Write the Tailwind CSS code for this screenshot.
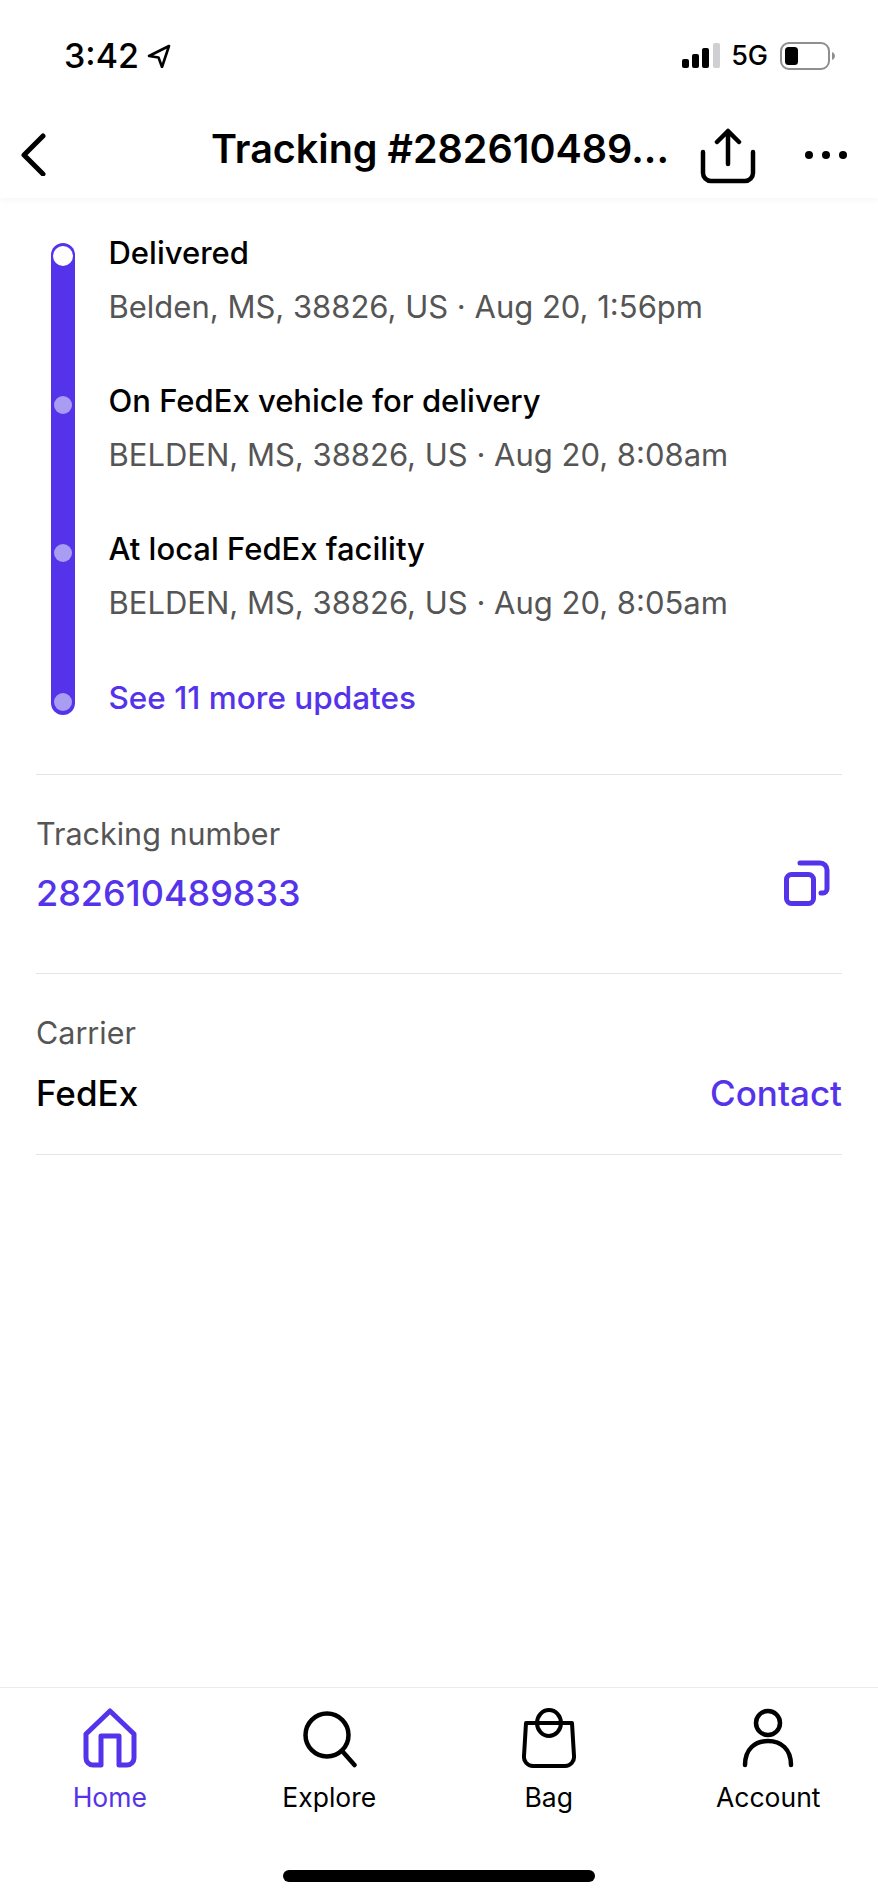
<!DOCTYPE html>
<html lang="en">
<head>
    <meta charset="UTF-8">
    <title>Tracking</title>
    <script src="https://cdn.jsdelivr.net/npm/@tailwindcss/browser@4"></script>
</head>
<body class="bg-white">
<div class="w-[878px] h-[1900px] flex flex-col bg-white text-black font-['Inter',sans-serif]">

    <!-- status bar -->
    <div class="h-[112px] shrink-0 flex items-start pt-[37px] pl-[64px] pr-[42px]">
        <span class="text-[34px] leading-[38px] font-medium">3:42</span>
        <svg class="ml-[8px] mt-[7px]" width="24" height="24" viewBox="0 0 24 24" fill="none" stroke="#000" stroke-width="2.600" stroke-linejoin="round"><path d="M22 2 2 12l9.500 1.500L15 23z"/></svg>
        <div class="ml-auto flex items-center h-[38px]">
            <svg width="38" height="26" viewBox="0 0 38 26"><rect x="0" y="16" width="7" height="9" rx="2" fill="#000"/><rect x="10" y="11" width="7" height="14" rx="2" fill="#000"/><rect x="20" y="5" width="7" height="20" rx="2" fill="#000"/><rect x="31" y="0" width="7" height="25" rx="2" fill="#cfcfd4"/></svg>
            <span class="ml-[11px] text-[27px] leading-[38px] font-medium">5G</span>
            <svg class="ml-[12px]" width="56" height="28" viewBox="0 0 56 28"><rect x="1" y="1" width="48" height="26" rx="8" fill="none" stroke="#8e8e93" stroke-width="2"/><rect x="5" y="5" width="13" height="18" rx="3.500" fill="#000"/><path d="M52 10c2 1 3 2.500 3 4s-1 3-3 4z" fill="#8e8e93"/></svg>
        </div>
    </div>

    <!-- nav bar -->
    <div class="h-[86px] shrink-0 relative flex items-center shadow-[0_3px_6px_rgba(0,0,0,0.03)]">
        <svg class="absolute left-[18px] top-[20px]" width="30" height="44" viewBox="0 0 30 44" fill="none" stroke="#000" stroke-width="5" stroke-linecap="round" stroke-linejoin="round"><path d="M25 4 6 23l19 19"/></svg>
        <span class="absolute left-[211px] top-[14px] text-[39.500px] leading-[46px] font-semibold whitespace-nowrap">Tracking #282610489...</span>
        <svg class="absolute left-[699px] top-[16px]" width="58" height="56" viewBox="0 0 58 56" fill="none" stroke="#000" stroke-width="4.500" stroke-linecap="round" stroke-linejoin="round"><path d="M29 36V3M18 14 29 3l11 11"/><path d="M4 24v21a8 8 0 0 0 8 8h34a8 8 0 0 0 8-8V24"/></svg>
        <div class="absolute left-[805px] top-[39px] flex gap-[9px]">
            <span class="w-[8px] h-[8px] rounded-full bg-black"></span>
            <span class="w-[8px] h-[8px] rounded-full bg-black"></span>
            <span class="w-[8px] h-[8px] rounded-full bg-black"></span>
        </div>
    </div>

    <!-- timeline -->
    <div class="flex pl-[51px] pt-[45px]">
        <div class="w-[24px] h-[472px] rounded-full bg-[#5533ea] flex flex-col items-center pt-[3px]">
            <span class="w-[20px] h-[20px] rounded-full bg-white"></span>
            <span class="w-[18px] h-[18px] rounded-full bg-[#a99cf3] mt-[130px]"></span>
            <span class="w-[18px] h-[18px] rounded-full bg-[#a99cf3] mt-[130px]"></span>
            <span class="w-[18px] h-[18px] rounded-full bg-[#a99cf3] mt-[131px]"></span>
        </div>
        <div class="ml-[33.500px] -mt-[15px]">
            <div class="h-[148px]">
                <p class="text-[31px] leading-[50px] font-medium">Delivered</p>
                <p class="text-[31px] leading-[58px] text-[#555]">Belden, MS, 38826, US · Aug 20, 1:56pm</p>
            </div>
            <div class="h-[148px]">
                <p class="text-[31px] leading-[50px] font-medium">On FedEx vehicle for delivery</p>
                <p class="text-[31px] leading-[58px] text-[#555]">BELDEN, MS, 38826, US · Aug 20, 8:08am</p>
            </div>
            <div class="h-[148px]">
                <p class="text-[31px] leading-[50px] font-medium">At local FedEx facility</p>
                <p class="text-[31px] leading-[58px] text-[#555]">BELDEN, MS, 38826, US · Aug 20, 8:05am</p>
            </div>
            <p class="text-[31.500px] leading-[50px] mt-[1px] font-medium text-[#5533ea]">See 11 more updates</p>
        </div>
    </div>

    <!-- details -->
    <div class="mx-[36px] mt-[51px] border-t border-[#e4e4e7] h-[199px] pt-[39px]">
        <p class="text-[30.500px] leading-[40px] text-[#555]">Tracking number</p>
        <div class="flex items-start justify-between">
            <p class="text-[36px] leading-[48px] font-medium text-[#5533ea] mt-[15px]">282610489833</p>
            <svg class="mr-[12px] mt-[6px]" width="46" height="47" viewBox="0 0 46 47" fill="none" stroke="#5533ea" stroke-width="5"><rect x="2.500" y="14.500" width="27" height="29" rx="5"/><path d="M16 3h20a7 7 0 0 1 7 7v19a4 4 0 0 1-4 4h-2" stroke-linecap="round" stroke-linejoin="round"/></svg>
        </div>
    </div>
    <div class="mx-[36px] border-t border-b border-[#e4e4e7] h-[182px] pt-[39px]">
        <p class="text-[30.500px] leading-[40px] text-[#555]">Carrier</p>
        <div class="flex items-center justify-between mt-[12px]">
            <p class="text-[35px] leading-[56px] font-medium">FedEx</p>
            <p class="text-[35px] leading-[56px] font-medium text-[#5533ea]">Contact</p>
        </div>
    </div>

    <!-- tab bar -->
    <div class="mt-auto border-t border-[#ececec] h-[213px] shrink-0 flex flex-col">
        <div class="grid grid-cols-4 pt-[20px]">
            <div class="flex flex-col items-center text-[#5533ea]">
                <svg width="56" height="60" viewBox="0 0 56 60" fill="none" stroke="#5533ea" stroke-width="5" stroke-linejoin="round"><path d="M28 3 4 26v24a7 7 0 0 0 7 7h8V28h18v29h8a7 7 0 0 0 7-7V26z"/></svg>
                <span class="text-[26.500px] leading-[32px] mt-[13px]">Home</span>
            </div>
            <div class="flex flex-col items-center">
                <svg width="60" height="60" viewBox="0 0 60 60" fill="none" stroke="#000" stroke-width="4.500" stroke-linecap="round"><circle cx="28" cy="27" r="21.500"/><path d="m44 44 11.500 13"/></svg>
                <span class="text-[26.500px] leading-[32px] mt-[13px]">Explore</span>
            </div>
            <div class="flex flex-col items-center">
                <svg width="56" height="60" viewBox="0 0 56 60" fill="none" stroke="#000" stroke-width="4" stroke-linejoin="round"><path d="M5 15h46l2 33a9 9 0 0 1-9 10H12a9 9 0 0 1-9-10z"/><ellipse cx="28" cy="15" rx="12" ry="13"/></svg>
                <span class="text-[26.500px] leading-[32px] mt-[13px]">Bag</span>
            </div>
            <div class="flex flex-col items-center">
                <svg width="54" height="60" viewBox="0 0 54 60" fill="none" stroke="#000" stroke-width="4.500" stroke-linecap="round"><circle cx="27" cy="15" r="12"/><path d="M4 57c0-16 10-24 23-24s23 8 23 24"/></svg>
                <span class="text-[26.500px] leading-[32px] mt-[13px]">Account</span>
            </div>
        </div>
        <div class="mt-auto mb-[18px] mx-auto w-[312px] h-[12px] rounded-full bg-black"></div>
    </div>
</div>
</body>
</html>
